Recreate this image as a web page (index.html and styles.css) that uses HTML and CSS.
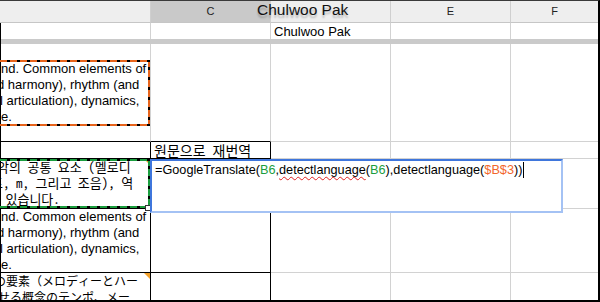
FILE: index.html
```html
<!DOCTYPE html>
<html>
<head>
<meta charset="utf-8">
<link rel="stylesheet" href="styles.css">
</head>
<body>
<div class="sheet">
  <div class="h hb"></div>
  <div class="h sel">C</div>
  <div class="h"></div>
  <div class="h">E</div>
  <div class="h last">F</div>

  <div class="c first r1"></div>
  <div class="c r1"></div>
  <div class="c r1 pad name">Chulwoo Pak</div>
  <div class="c r1"></div>
  <div class="c last r1"></div>

  <div class="freeze"></div>

  <div class="c first bb en top17">
    <span class="ln o0">nd. Common elements of</span>
    <span class="ln o2">d harmony), rhythm (and</span>
    <span class="ln o3">l articulation), dynamics,</span>
    <span class="ln o0">e.</span>
  </div>
  <div class="c bb"></div>
  <div class="c"></div>
  <div class="c"></div>
  <div class="c last"></div>

  <div class="c first bb br"></div>
  <div class="c bb br pad ko-head">원문으로 재번역</div>
  <div class="c"></div>
  <div class="c"></div>
  <div class="c last"></div>

  <div class="c first bb br ko mark">
    <span class="ln k1">악의 공통 요소 (멜로디</span>
    <span class="ln k2">포, m, 그리고 조음), 역</span>
    <span class="ln k3">수 있습니다.</span>
  </div>
  <div class="c bb br"></div>
  <div class="c"></div>
  <div class="c"></div>
  <div class="c last"></div>

  <div class="c first bb br en">
    <span class="ln o0">nd. Common elements of</span>
    <span class="ln o2">d harmony), rhythm (and</span>
    <span class="ln o3">l articulation), dynamics,</span>
    <span class="ln o0">e.</span>
  </div>
  <div class="c bb br"></div>
  <div class="c"></div>
  <div class="c"></div>
  <div class="c last"></div>

  <div class="c first br nb ja mark">
    <span class="ln j1">の要素（メロディーとハー</span>
    <span class="ln j2">せる概念のテンポ、メー</span>
  </div>
  <div class="c br nb"></div>
  <div class="c nb"></div>
  <div class="c nb"></div>
  <div class="c last nb"></div>

  <div class="name-tag">Chulwoo Pak</div>
  <div class="ants ants-orange"></div>
  <div class="ants ants-green"></div>
  <div class="handle"></div>
  <div class="editor">=GoogleTranslate(<span class="ref-g">B6</span>,<span class="typo">detectlanguage</span>(<span class="ref-g">B6</span>),detectlanguage(<span class="ref-o">$B$3</span>))<span class="caret"></span></div>
</div>
</body>
</html>
```

FILE: styles.css
```css
* { box-sizing: border-box; margin: 0; padding: 0; }
body { margin: 0; background: #fff; font-family: "Liberation Sans", Arial, sans-serif; }

.sheet {
  position: relative;
  width: 600px;
  height: 302px;
  border-top: 1px solid #3a3a3a;
  border-right: 2px solid #000;
  border-bottom: 2px solid #000;
  overflow: hidden;
  display: grid;
  grid-template-columns: 151px 120px 120px 120px 1fr;
  grid-template-rows: 22px 16px 5px 98px 17px 50px 64px 27px;
}

.h {
  background: #eeeeee;
  border-right: 1px solid #cfcfcf;
  border-bottom: 1px solid #c6c6c6;
  font-size: 11px;
  line-height: 21px;
  text-align: center;
  color: #222;
}
.h.sel { background: #c9c9c9; }
.h.last { border-right: none; }

.c {
  position: relative;
  border-right: 1px solid #d2d2d2;
  border-bottom: 1px solid #d2d2d2;
  font-size: 13px;
  line-height: 16px;
  color: #000;
  overflow: hidden;
  white-space: nowrap;
}
.c.first { border-left: 1px solid #000; }
.c.last { border-right: none; }
.c.bb { border-bottom-color: #000; }
.c.br { border-right-color: #000; }
.c.r1, .c.nb { border-bottom: none; }
.c.pad { padding-left: 3px; }
.c.name { padding-top: 1px; }
.c.top17 { padding-top: 17px; }

.freeze {
  grid-column: 1 / -1;
  background: #cacaca;
  border-left: 1px solid #000;
}

.ln { display: block; white-space: nowrap; }
.o0 { margin-left: 0; }
.o2 { margin-left: -4px; }
.o3 { margin-left: -1px; }

.ko-head {
  font-family: "Noto Sans Mono CJK KR", "Noto Sans CJK KR", sans-serif;
  font-size: 14px;
  line-height: 16px;
}
.ko {
  font-family: "Noto Sans Mono CJK KR", "Noto Sans CJK KR", sans-serif;
  font-size: 13px;
  line-height: 16px;
}
.k1 { margin-left: -4px; }
.k2 { margin-left: -10px; }
.k3 { margin-left: -14px; }

.ja {
  font-family: "Noto Sans Mono CJK JP", "Noto Sans CJK JP", sans-serif;
  font-size: 12px;
  line-height: 16px;
}
.j1 { margin-left: -7px; }
.j2 { margin-left: -3px; }

.mark::after {
  content: "";
  position: absolute;
  top: 0;
  right: 0;
  border-top: 6px solid #f4a12a;
  border-left: 6px solid transparent;
}

.name-tag {
  position: absolute;
  left: 257px;
  top: 0;
  font-size: 15.5px;
  line-height: 18px;
  color: #111;
  text-shadow: 0 3px 2px rgba(0, 0, 0, 0.22);
  white-space: nowrap;
}

.ants { position: absolute; left: -10px; width: 160px; }
.ants-orange {
  top: 59px;
  height: 66px;
  background:
    repeating-linear-gradient(90deg, #e8641c 0 7px, #000 7px 10px) top / 100% 2px no-repeat,
    repeating-linear-gradient(90deg, #e8641c 0 7px, #000 7px 10px) bottom / 100% 2px no-repeat,
    repeating-linear-gradient(180deg, #e8641c 0 7px, #000 7px 10px) right / 2px 100% no-repeat;
}
.ants-green {
  top: 158px;
  height: 49px;
  background:
    repeating-linear-gradient(90deg, #1b9e3e 0 7px, #000 7px 10px) top / 100% 2px no-repeat,
    repeating-linear-gradient(90deg, #1b9e3e 0 7px, #000 7px 10px) bottom / 100% 2px no-repeat,
    repeating-linear-gradient(180deg, #1b9e3e 0 7px, #000 7px 10px) right / 2px 100% no-repeat;
}

.handle {
  position: absolute;
  left: 145px;
  top: 204px;
  width: 6px;
  height: 6px;
  background: #fff;
  border: 1px solid #333;
}

.editor {
  position: absolute;
  left: 150px;
  top: 158px;
  width: 413px;
  height: 54px;
  background: #fff;
  border: 2px solid;
  border-color: #3f76dc #a4c2f4 #a4c2f4 #3f76dc;
  padding: 1px 3px;
  font-size: 12.7px;
  line-height: 16px;
  color: #000;
  white-space: nowrap;
}
.ref-g { color: #1b9e3e; }
.ref-o { color: #f2662b; }
.typo {
  text-decoration: underline wavy #e02020;
  text-decoration-thickness: 1px;
  text-underline-offset: 2px;
  text-decoration-skip-ink: none;
}
.caret {
  display: inline-block;
  width: 1px;
  height: 16px;
  background: #000;
  vertical-align: top;
  margin-left: 1px;
}
```
